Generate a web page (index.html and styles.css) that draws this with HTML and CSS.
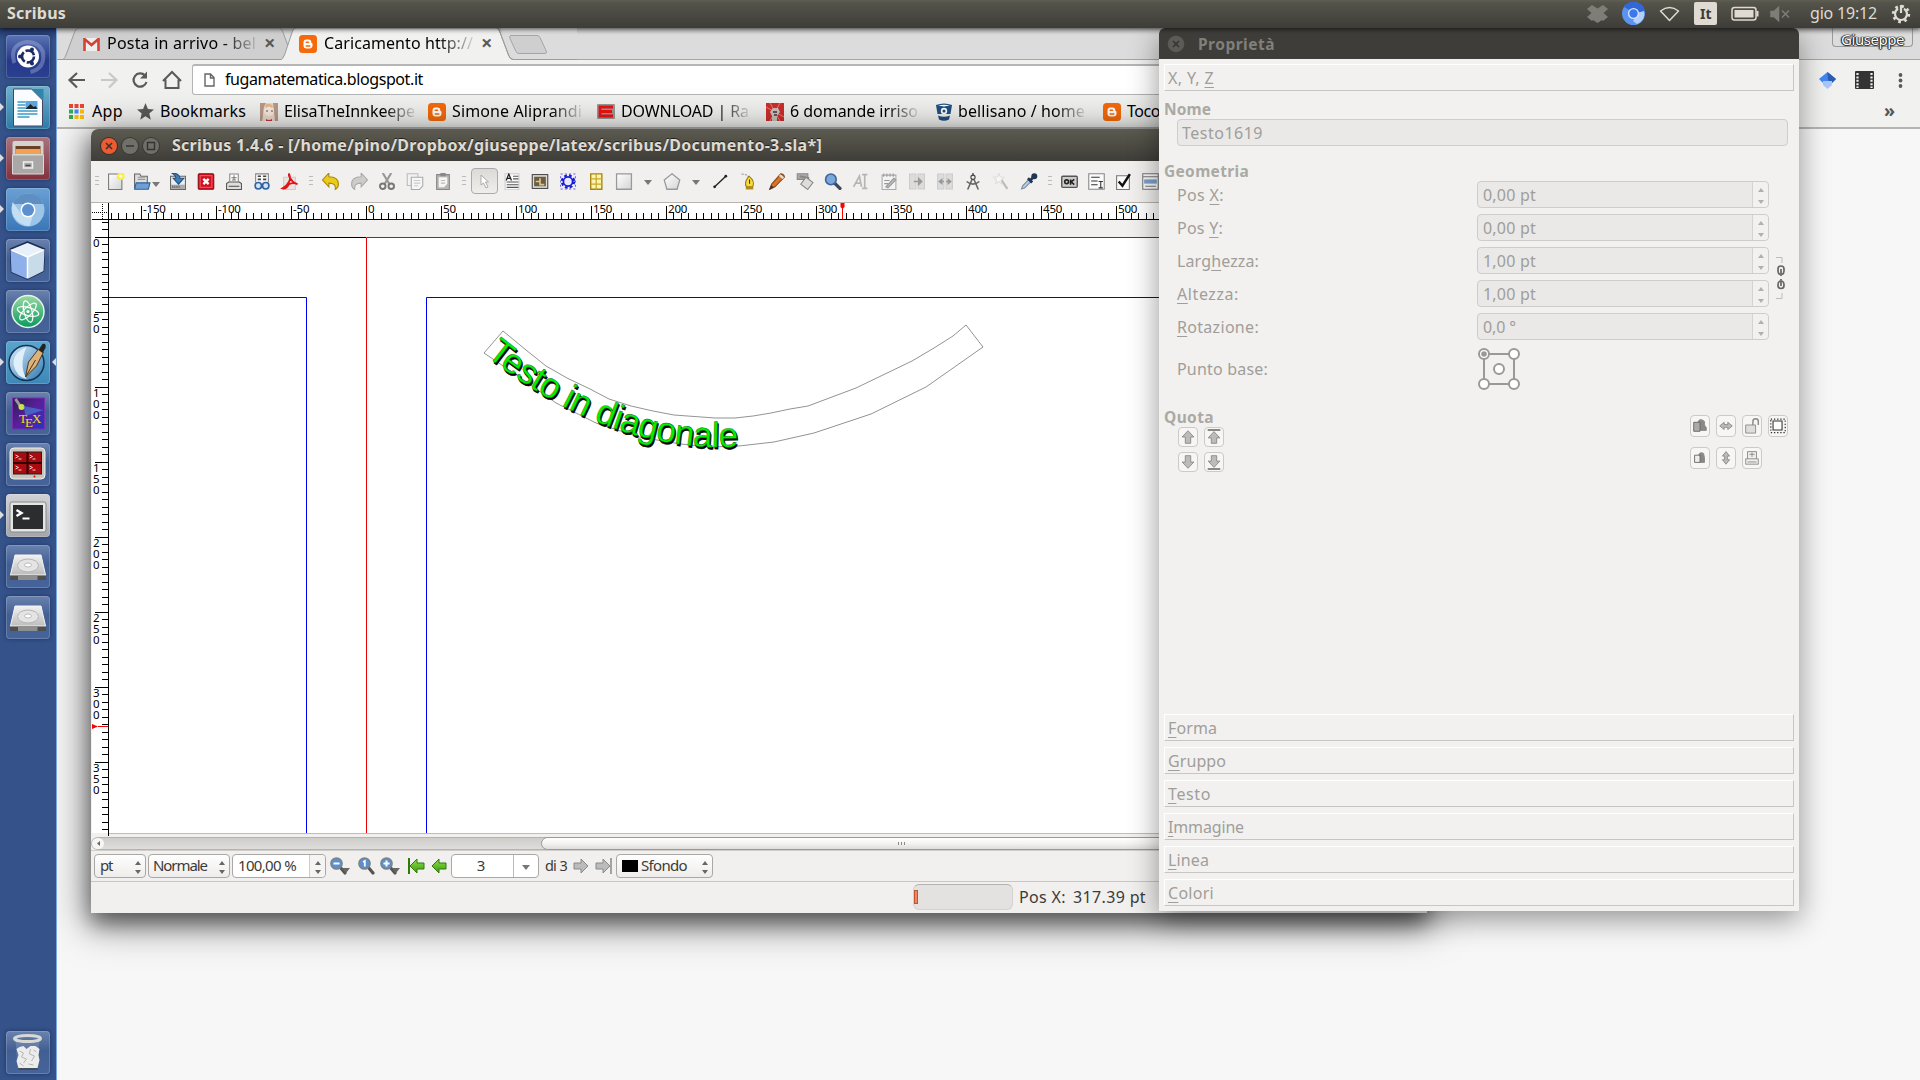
FILE: index.html
```
<!DOCTYPE html>
<html lang="it">
<head>
<meta charset="utf-8">
<title>Scribus</title>
<link rel="stylesheet" href="styles.css">
</head>
<body>
<svg class="defs" width="0" height="0">
  <defs>
    <linearGradient id="gGrey" x1="0" y1="0" x2="1" y2="1"><stop offset="0" stop-color="#fff"/><stop offset="1" stop-color="#d4d4d4"/></linearGradient>
    <linearGradient id="gGreen" x1="0" y1="0" x2="0" y2="1"><stop offset="0" stop-color="#8be04a"/><stop offset="1" stop-color="#3f9a10"/></linearGradient>
    <linearGradient id="gBlue" x1="0" y1="0" x2="1" y2="1"><stop offset="0" stop-color="#d8ecfa"/><stop offset="1" stop-color="#2f78b4"/></linearGradient>
    <linearGradient id="gAtom" x1="0" y1="0" x2="0" y2="1"><stop offset="0" stop-color="#9ad9a2"/><stop offset="1" stop-color="#0a9a5f"/></linearGradient>
    <linearGradient id="gTex" x1="0" y1="0" x2="1" y2="1"><stop offset="0" stop-color="#2c1c50"/><stop offset=".5" stop-color="#5a1f9c"/><stop offset="1" stop-color="#2436c0"/></linearGradient>
    <linearGradient id="gDrive" x1="0" y1="0" x2="0" y2="1"><stop offset="0" stop-color="#f2f2f2"/><stop offset="1" stop-color="#bdbdbd"/></linearGradient>
    <symbol id="blogger" viewBox="0 0 18 18"><rect width="18" height="18" rx="3.5" fill="#f66a0a"/><path d="M4.500 7.500a3 3 0 0 1 3-3h2a2.800 2.800 0 0 1 2.800 2.800c0 .8.400 1 1.200 1.200v2a3 3 0 0 1-3 3h-3a3 3 0 0 1-3-3z" fill="#fff"/><path d="M7.200 7.200h2.300M7.200 11h3.600" stroke="#f66a0a" stroke-width="1.500" stroke-linecap="round"/></symbol>
    <symbol id="arrow" viewBox="0 0 16 16"><path d="M15 5H8V1L1 8l7 7v-4h7z"/></symbol>
    <symbol id="lens" viewBox="0 0 20 18"><path d="M11 10l5 6" stroke="#555" stroke-width="3.200" stroke-linecap="round"/><circle cx="7.500" cy="6.500" r="5.600" fill="#5b90cf" stroke="#7c8288" stroke-width="1.500"/></symbol>
    <symbol id="drive" viewBox="0 0 43 43"><path d="M8.500 10h26l4.500 20H4z" fill="url(#gDrive)" stroke="#f5f5f5"/><path d="M3.500 30h36v5h-36z" fill="#8f8f8f"/><path d="M3.500 31h8v4h-8zM31 31h8.500v4H31z" fill="#4e4e4e"/><ellipse cx="21.500" cy="20.500" rx="10.500" ry="6.500" fill="#e4e4e4" stroke="#b5b5b5"/><ellipse cx="21.500" cy="20" rx="3.500" ry="2" fill="#fff" stroke="#bbb"/></symbol>
  </defs>
</svg>

<div class="desktop">
  <section class="browser">
    <div class="tabstrip">
      <svg class="tabs" width="520" height="33" viewBox="57 27 520 33">
        <path d="M57 59.500H63Q65 58 66 55L75 31Q76.500 28 79 28H279Q281 28 282.500 31L288 46V59.500z" fill="#cfcfcf" stroke="#9c9c9c"/>
        <path d="M280 60.500Q283 59 284.500 55L292.500 31Q294 28 296 28H496Q498 28 499.500 31L508.500 55Q510 59.500 513 59.500H577V61z" fill="#f1f1f0" stroke="#9c9c9c"/>
        <path d="M514 59.500H577V27H500Z" fill="#dcdcdc"/><path d="M498 28Q499 29 499.500 31L508.500 55Q510 59.500 513 59.500H577" fill="none" stroke="#9c9c9c"/>
        <path d="M511 35.500h26q2 0 3 2l6 13q1.500 3-1 3h-26q-2 0-3-2l-6-13q-1-3 1-3z" fill="#cfcfcf" stroke="#a5a5a5"/>
      </svg>
      <div class="tab tab-a">
        <svg width="17" height="13" viewBox="0 0 17 13"><path d="M1 0h15v13H1z" fill="#eee"/><path d="M1.500 13V1l7 6 7-6v12" fill="none" stroke="#d54234" stroke-width="2.600"/></svg>
        <span class="fade" data-w="149">Posta in arrivo - bel</span><b class="x">×</b>
      </div>
      <div class="tab tab-b">
        <svg width="18" height="18"><use href="#blogger"/></svg>
        <span class="fade" data-w="149">Caricamento http://</span><b class="x">×</b>
      </div>
      <div class="user"><span data-w="63">Giuseppe</span></div>
    </div>
    <div class="navbar">
      <svg width="124" height="24" viewBox="0 0 124 24" fill="none" stroke="#5a5a5a" stroke-width="2.200">
        <path d="M12 5l-7.500 7L12 19.500M5 12h15"/><path d="M44 5l7.500 7-7.500 7.500M51 12H36" stroke="#c8c8c8"/>
        <path d="M80 7.500A6.600 6.600 0 1 0 81.500 14"/><path d="M82 3.500v7h-7z" fill="#5a5a5a" stroke="none"/>
        <path d="M98 13l9-9 9 9M100.500 11.500V20h13v-8.500" stroke-width="2"/>
      </svg>
      <div class="url"><svg width="11" height="14" viewBox="0 0 11 14"><path d="M1 1h5.500L10 4.500V13H1zM6.500 1v4H10" fill="#fff" stroke="#666" stroke-width="1.400"/></svg><span data-w="198">fugamatematica.blogspot.it</span></div>
      <svg class="ext" width="100" height="24" viewBox="1810 68 100 24">
        <path d="M1827.500 72l8.500 7-4 4h-9l-4-4z" fill="#4285f4"/><path d="M1827.500 72l8.500 7-4 4-4-3z" fill="#2a5db0"/><path d="M1823 81h9v4l-4.500 4-4.500-4z" fill="#a8c7fa"/>
        <rect x="1855" y="71" width="19" height="18" rx="1" fill="#333"/><path d="M1857.500 73v15M1871.500 73v15" stroke="#eee" stroke-width="2.200" stroke-dasharray="2 1.400"/>
        <g fill="#5a5a5a"><circle cx="1900.500" cy="75" r="1.900"/><circle cx="1900.500" cy="80.500" r="1.900"/><circle cx="1900.500" cy="86" r="1.900"/></g>
      </svg>
    </div>
    <div class="bookmarks">
      <svg width="15" height="15" viewBox="0 0 15 15"><path d="M0 0h4v4H0zM5.500 0h4v4h-4zM11 0h4v4h-4z" fill="#ea4335"/><path d="M0 5.500h4v4H0zM0 11h4v4H0z" fill="#34a853"/><path d="M5.500 5.500h4v4h-4z" fill="#4285f4"/><path d="M11 5.500h4v4h-4zM5.500 11h4v4h-4zM11 11h4v4h-4z" fill="#fbbc05"/></svg>
      <span class="bm w69" data-w="31">App</span>
      <svg width="17" height="17" viewBox="0 0 17 17"><path d="M8.500 0l2.400 6 6.100.4-4.700 4 1.500 6.300-5.300-3.500-5.300 3.500 1.500-6.300L0 6.400 6.100 6z" fill="#5a5a5a"/></svg>
      <span class="bm" data-w="86">Bookmarks</span>
      <svg class="g14" width="18" height="18" viewBox="0 0 18 18"><rect width="18" height="18" fill="#ecd9cc"/><path d="M0 0h6C2 5 4 13 2 18H0zM13 0h5v18h-3z" fill="#b99a86"/><circle cx="9" cy="8" r="5" fill="#fbe9dd"/><path d="M5 2q4-3 8 1l-1 2q-3-3-6 0z" fill="#e4b98a"/><path d="M6 8h2M11 8h2" stroke="#556"/><path d="M6 16q3 2 6 0v2H6z" fill="#c33"/></svg>
      <span class="bm fade" data-w="131">ElisaTheInnkeepe</span>
      <svg class="g13" width="18" height="18"><use href="#blogger"/></svg>
      <span class="bm fade" data-w="130">Simone Aliprandi</span>
      <svg class="g15" width="18" height="15" viewBox="0 0 18 15"><rect width="18" height="15" rx="1" fill="#999"/><path d="M16 3H3v9h13M3 7.500h12" stroke="#e11" stroke-width="2.800" fill="none"/></svg>
      <span class="bm fade" data-w="128">DOWNLOAD | Ra</span>
      <svg class="g17" width="18" height="18" viewBox="0 0 18 18"><rect width="18" height="18" fill="#cf2d2d"/><path d="M0 4l18 10M4 0l10 18M14 0L4 18" stroke="#e8807a"/><path d="M6 18v-5l-2-4 3-4h5l2 4-3 4v5z" fill="#c9c3bd"/><path d="M7 9h4M8 12h3" stroke="#433" stroke-width="1.500"/></svg>
      <span class="bm fade" data-w="128">6 domande irriso</span>
      <svg class="g18" width="16" height="18" viewBox="0 0 16 18"><path d="M0 2q8-3 16 0l-1.500 9H1.500zM2 12.500q6 2.500 12 0l-1 4q-5 2.500-10 0z" fill="#205081"/><circle cx="8" cy="8" r="3.200" fill="#fff"/><circle cx="8" cy="8" r="1.500" fill="#205081"/><path d="M2 2.600q6-1.600 12 0-6 1.600-12 0z" fill="#fff"/></svg>
      <span class="bm fade" data-w="127">bellisano / home</span>
      <svg class="g18" width="18" height="18"><use href="#blogger"/></svg>
      <span class="bm" data-w="33">Toco</span>
      <b class="more">»</b>
    </div>
  </section>

  <section class="scribus">
    <header class="title">
      <svg width="66" height="20" viewBox="0 0 66 20"><circle cx="10" cy="10" r="9" fill="#32312c"/><circle cx="10" cy="10" r="8" fill="#ec5b32"/><path d="M7 7l6 6M13 7l-6 6" stroke="#40302a" stroke-width="1.600"/><circle cx="31" cy="10" r="9" fill="#3a3934"/><circle cx="31" cy="10" r="8" fill="#716f69"/><path d="M27 10h8" stroke="#333" stroke-width="1.500"/><circle cx="52" cy="10" r="9" fill="#3a3934"/><circle cx="52" cy="10" r="8" fill="#716f69"/><path d="M48.500 6.500h7v7h-7z" fill="none" stroke="#333" stroke-width="1.400"/></svg>
      <span data-w="650">Scribus 1.4.6 - [/home/pino/Dropbox/giuseppe/latex/scribus/Documento-3.sla*]</span>
    </header>
    <div class="toolbar">
      <i class="h w11"></i>
      <svg class="w27" viewBox="0 0 16 16"><path d="M1.500 1h12.500v14.500H1.500z" fill="url(#gGrey)" stroke="#777"/><circle cx="13" cy="3" r="3.600" fill="#f7ee45"/><circle cx="13" cy="3" r="1.500" fill="#fffbd0"/></svg>
      <svg class="w26" viewBox="0 0 16 16"><path d="M1 14V1h5l1 2h6v11z" fill="#ddd" stroke="#666"/><path d="M4 4h7M4 6h7" stroke="#999"/><path d="M1 15.300l1.500-6h13l-1.500 6z" fill="#6d9fd4" stroke="#2f5f96"/></svg><i class="tri w9"></i>
      <svg class="w28" viewBox="0 0 16 16"><path d="M1 3h14v12.500H1z" fill="#eee" stroke="#666"/><path d="M1.500 11h13v4h-13z" fill="#aaa"/><path d="M3 12v2M5 12v2M7 12v2M9 12v2" stroke="#666"/><path d="M2 0q7 0 8 5h3.500L8.500 10.500 3.500 5H6Q6 2 2 0z" fill="#3f7fb8" stroke="#1f4f80"/></svg>
      <svg class="w28" viewBox="0 0 16 16"><rect x=".7" y=".7" width="14.600" height="14.600" rx="1" fill="#cf1120" stroke="#8c0a14"/><rect x="2.500" y="2.500" width="11" height="11" fill="none" stroke="#f05a62"/><path d="M5.500 5.500l5 5M10.500 5.500l-5 5" stroke="#fff" stroke-width="2.200"/></svg>
      <svg class="w28" viewBox="0 0 16 16"><path d="M4 8V1h8v7" fill="#fff" stroke="#888"/><path d="M5.500 4.500h5M8 2v5M6 6.500h4" stroke="#777"/><path d="M1 15.500V10l2-1.500h10l2 1.500v5.500z" fill="#dedede" stroke="#555"/><path d="M3 12.500h10" stroke="#555"/></svg>
      <svg class="w28" viewBox="0 0 16 16"><path d="M2 9V.8h12V9" fill="#f8f8f8" stroke="#888"/><path d="M4 3h3M4 6h3M9 3h3M9 6h3" stroke="#444" stroke-width="1.500"/><circle cx="4.500" cy="12" r="3" fill="#d5e4f5" stroke="#2d62a3" stroke-width="1.500"/><circle cx="11.500" cy="12" r="3" fill="#d5e4f5" stroke="#2d62a3" stroke-width="1.500"/></svg>
      <svg class="w28" viewBox="0 0 16 16"><path d="M2 4h11v11.500H2z" fill="#e8e4e4" stroke="#ccc"/><path d="M7 .5q2 5 0 8-2 4-6 6 3 1 6-4 4-2 8 0-5-1-8-8z" fill="#fff" stroke="#e01616" stroke-width="1.800"/></svg>
      <i class="h w13"></i>
      <svg class="w28" viewBox="0 0 16 16"><path d="M6 0v3.500q9 0 9 7 0 3-3 5 1-6-6-6V13L0 6.500z" fill="#eccb1c" stroke="#a88a08"/></svg>
      <svg class="w28" viewBox="0 0 16 16"><path d="M10 0v3.500q-9 0-9 7 0 3 3 5-1-6 6-6V13l6-6.500z" fill="#ccc" stroke="#aaa"/></svg>
      <svg class="w28" viewBox="0 0 16 16"><path d="M4 0l6 10M12 0L6 10" stroke="#999" stroke-width="2"/><circle cx="4" cy="12.500" r="2.600" fill="none" stroke="#777" stroke-width="1.800"/><circle cx="12" cy="12.500" r="2.600" fill="none" stroke="#777" stroke-width="1.800"/></svg>
      <svg class="w28" viewBox="0 0 16 16"><path d="M.7.700h10v11H.7z" fill="#f2f2f2" stroke="#bbb"/><path d="M4.500 4h10.800v8l-3 3.500H4.500z" fill="#f6f6f6" stroke="#aaa"/><path d="M7 7h6M7 9.500h6M7 12h4" stroke="#ccc"/></svg>
      <svg class="w28" viewBox="0 0 16 16"><path d="M2 1.500h12v14H2z" fill="#b5b5b5" stroke="#888"/><path d="M4 4h8v6l-3 3.500H4z" fill="#f5f5f5"/><path d="M5.500 0h5v3h-5z" fill="#888"/><path d="M6 7h4M6 9.500h4" stroke="#bbb"/></svg>
      <i class="h w14"></i>
      <div class="w27 pressed"><svg viewBox="0 0 16 16"><path d="M4 2l7.500 7H8.500l2.500 5-2 1-2.500-5L4 12z" fill="#fff" stroke="#aaa"/></svg></div>
      <svg class="w28" viewBox="0 0 16 16"><path d="M1.500.700h13v15h-13z" fill="#fafafa" stroke="#ccc"/><path d="M9 3h5M9 5.500h5M3 8.500h11M3 11h11M3 13.500h11" stroke="#555"/><path d="M2.500 7l2.500-6 2.500 6M3.500 5h3" stroke="#222" fill="none" stroke-width="1.200"/></svg>
      <svg class="w28" viewBox="0 0 16 16"><rect x=".7" y="1.500" width="14.600" height="13" fill="#ddd" stroke="#444"/><path d="M2.500 3.500h11v9h-11z" fill="#6b5c42"/><path d="M4 8h4V5M8 8v3h4" stroke="#d9c48b" fill="none" stroke-width="1.600"/></svg>
      <svg class="w28" viewBox="0 0 16 16"><path d="M1 1h14v14H1z" fill="none" stroke="#66e" stroke-dasharray="2 2"/><circle cx="8" cy="8" r="5.800" fill="none" stroke="#1919d8" stroke-width="2" stroke-dasharray="2.600 2"/><circle cx="8" cy="8" r="4.300" fill="#e8e8ff" stroke="#1919d8" stroke-width="1.600"/></svg>
      <svg class="w28" viewBox="0 0 16 16"><path d="M3 .8h10.500v14.500H3z" fill="#fdf4b0" stroke="#a58510" stroke-width="1.300"/><path d="M8.200 1v14.500M3 5.500h10.500M3 10.500h10.500" stroke="#c9a82e" stroke-width="1.200"/></svg>
      <svg class="w28" viewBox="0 0 16 16"><path d="M1 .8h14v14.500H1z" fill="url(#gGrey)" stroke="#999" stroke-width="1.200"/></svg>
      <i class="tri w20"></i>
      <svg class="w28" viewBox="0 0 16 16"><path d="M8 .8l7.300 5.700-2.500 8.800H3.200L.7 6.500z" fill="url(#gGrey)" stroke="#999" stroke-width="1.200"/></svg>
      <i class="tri w20"></i>
      <svg class="w29" viewBox="0 0 16 16"><path d="M2 13.500L13 3" stroke="#222" stroke-width="1.300"/><circle cx="2.500" cy="13" r="1.300" fill="#222"/><circle cx="13" cy="3" r="1.300" fill="#222"/></svg>
      <svg class="w28" viewBox="0 0 16 16"><path d="M1 1q6 0 8 5" stroke="#999" fill="none" stroke-dasharray="2 1"/><path d="M8 3q6 5 3.500 10h-6Q3 9 8 3z" fill="#f5db3d" stroke="#9a7c12"/><path d="M5 13h7v2.500H5z" fill="#b08b16"/><path d="M8.500 6v4" stroke="#333"/></svg>
      <svg class="w28" viewBox="0 0 16 16"><path d="M1 15.500l2-5L11.500.800q3 0 3.500 3L6 13z" fill="#d9742b" stroke="#8c4413"/><path d="M1 15.500l1.500-4 2.500 2z" fill="#333"/><path d="M10.500 2L14 5" stroke="#e8e0d8" stroke-width="2"/></svg>
      <svg class="w28" viewBox="0 0 16 16"><path d="M.7.700h10V6H.7z" fill="#aaa" stroke="#888"/><path d="M3 3l9 2" stroke="#888" stroke-width="2"/><path d="M9 4l6.500 5-5 6.500L4 10.500z" fill="#ddd" stroke="#888"/></svg>
      <svg class="w28" viewBox="0 0 16 16"><path d="M9.500 9.500l5 5" stroke="#3d4a5c" stroke-width="3.200" stroke-linecap="round"/><circle cx="6" cy="6" r="5" fill="#7ba7db" stroke="#3b679d" stroke-width="1.500"/></svg>
      <svg class="w28" viewBox="0 0 16 16" fill="none" stroke="#b5b5b5" stroke-width="1.600"><path d="M1 13L6.500 3l2 10M3 9.500h5M9 1.500h5M9 14.500h5M11.500 1.500v13"/></svg>
      <svg class="w28" viewBox="0 0 16 16"><path d="M1.500 2h13v13.500h-13z" fill="#f3f3f3" stroke="#aaa"/><path d="M3 .5v3M6 .5v3M9 .5v3M12 .5v3M3.500 7h5M3.500 10h4" stroke="#999"/><path d="M5 13l7.500-8 2 1.500L7 14z" fill="#bbb" stroke="#999"/></svg>
      <svg class="w28" viewBox="0 0 16 16"><path d="M1 1h6v14H1zM9 1h6v14H9z" fill="#dcdcdc" stroke="#ccc"/><path d="M5 8h7M9.500 5v6l3-3z" fill="#aaa" stroke="#999" stroke-width="1.300"/></svg>
      <svg class="w28" viewBox="0 0 16 16"><path d="M1 1h6v14H1zM9 1h6v14H9z" fill="#dcdcdc" stroke="#ccc"/><path d="M4 8h3M9 8h3M5 6v4L2.500 8zM11 6v4l2.500-2z" fill="#999" stroke="#999" stroke-width="1.200"/></svg>
      <svg class="w28" viewBox="0 0 16 16"><path d="M8 0v3M8 4L3 15.500M8 4l5 11.500M2 8q6 5 12 0" stroke="#666" fill="none" stroke-width="1.500"/><circle cx="8" cy="4" r="2" fill="#eee" stroke="#444"/></svg>
      <svg class="w28" viewBox="0 0 16 16"><path d="M8 6l6 9" stroke="#bbb" stroke-width="2"/><path d="M6 0l1.200 3.500L11 4 8 6.500l.5 3.500L6 8l-3 2 .7-3.500L1 4l3.800-.5z" fill="#f7f7f7" stroke="#ddd"/></svg>
      <svg class="w28" viewBox="0 0 16 16"><path d="M1 15l1-3 6-6 2 2-6 6z" fill="#b7d1ea" stroke="#7b8a99"/><path d="M7 5l4 4M9 7l4-4" stroke="#1f3756" stroke-width="2.500"/><circle cx="13" cy="3" r="2.800" fill="#1f3756"/></svg>
      <i class="h w13"></i>
      <svg class="w27" viewBox="0 0 16 16"><rect x=".7" y="3" width="14.600" height="10.500" rx="1" fill="#ccc" stroke="#555" stroke-width="1.300"/><circle cx="5.300" cy="8.300" r="1.800" fill="none" stroke="#222" stroke-width="1.500"/><path d="M9 6v5M12.500 6L9.500 8.300l3 2.700" stroke="#222" fill="none" stroke-width="1.500"/></svg>
      <svg class="w27" viewBox="0 0 16 16"><path d="M.7.700h14.600v14.600H.7z" fill="#fafafa" stroke="#888"/><path d="M3 4h8M3 7.500h6M3 11h6M10 8h4M10 14h4M12 8v6" stroke="#333"/></svg>
      <svg class="w27" viewBox="0 0 16 16"><path d="M1.500 2.500h12v13h-12z" fill="#fafafa" stroke="#777"/><path d="M3.500 8l3.500 4L14 1" fill="none" stroke="#111" stroke-width="2.300"/></svg>
      <svg class="w27" viewBox="0 0 16 16"><path d="M.7.700h14.600v14.600H.7z" fill="#fafafa" stroke="#777"/><path d="M1 3.500h14M3 12.500h10" stroke="#777"/><path d="M2 6h12v4H2z" fill="#7ea2cc"/></svg>
    </div>
    <svg class="canvas" width="1336" height="635" viewBox="91 202 1336 635">
      <rect x="91" y="202" width="1336" height="635" fill="#f1f0ee"/>
      <rect x="91" y="202" width="1336" height="1" fill="#b8b5b0"/>
      <rect x="92" y="203" width="1335" height="17" fill="#fff"/>
      <rect x="92" y="220" width="17" height="613" fill="#fff"/>
      <rect x="109" y="237" width="1318" height="596" fill="#fff"/>
      <path d="M109 833.500H1427" stroke="#c0beba"/>
      <path d="M92 212.500h16M102.500 204v16" stroke="#000" stroke-dasharray="1 1"/>
      <g fill="none"><path d="M109 237.500H366" stroke="#000"/><path d="M1427 237.500H366.500V833" stroke="#e60000"/><path d="M109 297.500H306.500V833M426.500 833V297.500H1427" stroke="#0000f0"/></g>
      <g id="ruler" stroke="#000"></g>
      <g id="labels" class="ruler-text"></g>
      <path d="M92 219.500H1427M108.500 203V836" stroke="#000"/>
      <path d="M842.500 206V219M98 726.500h10" stroke="#f00"/><path d="M840.500 203h4v4l-2 2-2-2zM92 724l6 2.500-6 2.500z" fill="#f00"/>
      <path d="M503 331L526 350L546 366L567 378L590 389L609 399L631 406L653 411L674 415L715 418L735 418L753 416L771 413L790 409L808 406L856 388L912 361L934 348L953 336L966 325L983 347L926 387L871 414L814 433L774 442L739 446L710 447L681 444L639 437L596 423L556 403L521 378L484 353Z" fill="none" stroke="#777" stroke-width=".8"/>
      <path id="curve" d="M484 354Q594 442 710 447Q760 449 814 433" fill="none"/>
      <g class="arc"><text transform="translate(1 2)" fill="#000" stroke="#000" stroke-width=".6"><textPath href="#curve" startOffset="2" textLength="275">Testo in diagonale</textPath></text>
      <text fill="#00f000" stroke="#0a5a0a" stroke-width=".4"><textPath href="#curve" startOffset="2" textLength="275">Testo in diagonale</textPath></text></g>
    </svg>
    <div class="scroll"><svg class="sbtn" viewBox="0 0 12 11"><path d="M8 3v5L5 5.500z" fill="#666"/></svg><div class="thumb"><i></i><i></i><i></i></div></div>
    <div class="controls">
      <div class="combo c-pt"><span data-w="12">pt</span><i class="ud"></i></div>
      <div class="combo c-nor"><span data-w="54">Normale</span><i class="ud"></i></div>
      <div class="spin c-zoom"><span data-w="58">100,00 %</span><i class="ud"></i></div>
      <svg class="zo" width="21" height="18" viewBox="0 0 21 18"><use href="#lens" width="20" height="18"/><path d="M4.500 6.500h6" stroke="#fff" stroke-width="2"/><path d="M13 11h8l-4 5z" fill="#666"/></svg>
      <svg class="z1" width="18" height="18" viewBox="0 0 18 18"><use href="#lens" width="20" height="18"/><path d="M6 5l1.800-1v5.500" stroke="#fff" stroke-width="1.800" fill="none"/></svg>
      <svg class="zi" width="21" height="18" viewBox="0 0 21 18"><use href="#lens" width="20" height="18"/><path d="M4.500 6.500h6M7.500 3.500v6" stroke="#fff" stroke-width="2"/><path d="M13 11h8l-4 5z" fill="#666"/></svg>
      <svg class="a1" width="17" height="16" viewBox="0 0 17 16"><path d="M1 0v16" stroke="#2f7a0a" stroke-width="2"/><use href="#arrow" x="1" width="16" height="16" fill="url(#gGreen)" stroke="#2f7a0a"/></svg>
      <svg class="a2" width="17" height="16" viewBox="0 0 17 16"><use href="#arrow" width="16" height="16" fill="url(#gGreen)" stroke="#2f7a0a"/></svg>
      <div class="pages"><span>3</span><i class="tri"></i></div>
      <span class="di">di 3</span>
      <svg class="a3" width="17" height="16" viewBox="0 0 17 16"><use href="#arrow" width="16" height="16" fill="#bbb" stroke="#8a8a8a" transform="matrix(-1 0 0 1 17 0)"/></svg>
      <svg class="a4" width="17" height="16" viewBox="0 0 17 16"><use href="#arrow" width="16" height="16" fill="#bbb" stroke="#8a8a8a" transform="matrix(-1 0 0 1 16 0)"/><path d="M16 0v16" stroke="#8a8a8a" stroke-width="1.500"/></svg>
      <div class="combo c-sf"><b></b><span data-w="46">Sfondo</span><i class="ud"></i></div>
    </div>
    <footer class="status"><div class="prog"><i></i></div><span data-w="47">Pos X:</span><span class="pos" data-w="73">317.39 pt</span></footer>
  </section>

  <section class="props">
    <header class="ptitle"><svg width="18" height="18" viewBox="0 0 18 18"><circle cx="9" cy="9" r="8.300" fill="#5c5b56"/><path d="M6 6l6 6M12 6l-6 6" stroke="#333" stroke-width="1.500"/></svg><span data-w="77">Proprietà</span></header>
    <div class="pbody">
      <div class="sect"><span data-w="46">X, Y, <u>Z</u></span></div>
      <h3 class="nome"><span data-w="47">Nome</span></h3>
      <div class="field name"><span data-w="81">Testo1619</span></div>
      <h3 class="geo"><span data-w="85">Geometria</span></h3>
      <div class="geom">
        <div class="rows">
          <label><span data-w="47">Pos <u>X</u>:</span></label><div class="field sp"><span data-w="53">0,00 pt</span><i class="ud"></i></div>
          <label><span data-w="46">Pos <u>Y</u>:</span></label><div class="field sp"><span data-w="53">0,00 pt</span><i class="ud"></i></div>
          <label><span data-w="82">Larg<u>h</u>ezza:</span></label><div class="field sp"><span data-w="53">1,00 pt</span><i class="ud"></i></div>
          <label><span data-w="62"><u>A</u>ltezza:</span></label><div class="field sp"><span data-w="53">1,00 pt</span><i class="ud"></i></div>
          <label><span data-w="82"><u>R</u>otazione:</span></label><div class="field sp"><span data-w="33">0,0 °</span><i class="ud"></i></div>
          <label class="pb"><span data-w="91">Punto base:</span></label>
          <svg class="base" width="44" height="44" viewBox="0 0 44 44" fill="#fff" stroke="#9a9996" stroke-width="2"><path d="M7 7h30v30H7z" fill="none"/><circle cx="7" cy="7" r="5"/><circle cx="37" cy="7" r="5"/><circle cx="7" cy="37" r="5"/><circle cx="37" cy="37" r="5"/><circle cx="22" cy="22" r="5"/><circle cx="7" cy="7" r="2.800" fill="#9a9996" stroke="none"/></svg>
        </div>
        <svg class="chain" width="10" height="44" viewBox="0 0 10 44" fill="none"><path d="M0 1.500h6V7M0 42.500h6V37" stroke="#bbb"/><g stroke="#666" stroke-width="1.700"><path d="M4 18.500q-2-1-2-3.500v-2q0-3 3-3t3 3v2q0 2.500-2 3.500M5 13v7M4 25q-2 1-2 3.500v1q0 3 3 3t3-3v-1q0-2.500-2-3.500M5 23v7"/></g></svg>
      </div>
      <h3 class="quota"><span data-w="50">Quota</span></h3>
      <div class="actions">
        <div class="grid2">
          <svg viewBox="0 0 20 20"><path d="M10 3l6.500 7H13v7H7v-7H3.500z"/></svg>
          <svg viewBox="0 0 20 20"><path d="M10 4l6.500 7H13v6H7v-6H3.500z"/><path d="M3 2.200h14" class="bar"/></svg>
          <svg viewBox="0 0 20 20"><path d="M10 17l6.500-7H13V3H7v7H3.500z"/></svg>
          <svg viewBox="0 0 20 20"><path d="M10 16l6.500-7H13V3H7v6H3.500z"/><path d="M3 17.800h14" class="bar"/></svg>
        </div>
        <div class="grid4">
          <svg viewBox="0 0 20 22"><path d="M8 6q2-4 7 0v4l2 3v3H8z" fill="#888"/><path d="M3 7h7v10H3z" fill="#aaa" stroke="#666"/></svg>
          <svg viewBox="0 0 20 22"><path d="M3 11l5-4v2.500h4V7l5 4-5 4v-2.500H8V15z"/></svg>
          <svg viewBox="0 0 20 22"><path d="M3 10h11v9H3z" fill="#ddd"/><path d="M11 10V6q0-3 3-3t3 3v4" fill="none" stroke-width="1.600"/></svg>
          <svg viewBox="0 0 20 22"><path d="M4.500 5.500h10v10h-10z" fill="#fff" stroke="#333" stroke-width="1.200"/><path d="M2 3.500h16v15H2z" fill="none" stroke="#333" stroke-width="1.300" stroke-dasharray="1.500 2"/></svg>
          <svg viewBox="0 0 20 22"><path d="M9 7q1-3 5-1l1 5v5H9z" fill="#888"/><path d="M4 8h6v8H4z" fill="#eee" stroke="#666"/></svg>
          <svg viewBox="0 0 20 22"><path d="M10 4l4 5h-2.500v4H14l-4 5-4-5h2.500V9H6z"/></svg>
          <svg viewBox="0 0 20 22"><path d="M5 12V4h10v8M3 12h14v6H3z" fill="#eee"/><path d="M7 7h6M10 5v5M5 15.500h10" fill="none"/></svg>
        </div>
      </div>
      <div class="sections">
        <div class="sect"><span data-w="49"><u>F</u>orma</span></div>
        <div class="sect"><span data-w="58"><u>G</u>ruppo</span></div>
        <div class="sect"><span data-w="43"><u>T</u>esto</span></div>
        <div class="sect"><span data-w="76"><u>I</u>mmagine</span></div>
        <div class="sect"><span data-w="41"><u>L</u>inea</span></div>
        <div class="sect"><span data-w="46"><u>C</u>olori</span></div>
      </div>
    </div>
  </section>

  <nav class="launcher">
    <div class="tile t-dash"><svg viewBox="0 0 43 43"><g fill="none" stroke="#b9c8ee" stroke-opacity=".35" stroke-width="4"><path d="M8 28Q2 10 20 7q14 0 17 12M36 15q4 18-12 22"/></g><circle cx="21.500" cy="21.500" r="11" fill="#fff"/><circle cx="21.500" cy="21.500" r="6" fill="none" stroke="#1c2a66" stroke-width="2.600" stroke-dasharray="10.500 2"/><g fill="#1c2a66"><circle cx="13.500" cy="21.500" r="2"/><circle cx="25.500" cy="14.500" r="2"/><circle cx="25.500" cy="28.500" r="2"/></g></svg></div>
    <div class="tile t-writer run"><svg viewBox="0 0 43 43"><path d="M7 3h18l11 11v26H7z" fill="#fafdff" stroke="#446"/><path d="M25 3h12v11z" fill="#2f86a8"/><path d="M11 16h8M11 19h8M11 22h8M11 25h20M11 28h20M11 31h12" stroke="#3d9bc8" stroke-width="1.600"/><path d="M19 15h12v8H19z" fill="#5aa6dc"/><path d="M19 23l5-5 3 3 2-1 2 3z" fill="#222"/></svg></div>
    <div class="tile t-files run"><svg viewBox="0 0 43 43"><path d="M6 6q0-2 2-2h27q2 0 2 2v13H6z" fill="#d5d3d0"/><path d="M9 9h25v8H9z" fill="#6a4026"/><path d="M9 12h25v5H9z" fill="#f2a257"/><path d="M6 18h31v19H6z" fill="#a9a8a6" stroke="#d8d8d6"/><path d="M17 25h9v6h-9z" fill="none" stroke="#f0f0f0" stroke-width="1.500"/><path d="M19 28.500h5" stroke="#444" stroke-width="1.500"/></svg></div>
    <div class="tile t-chr run"><svg viewBox="0 0 43 43"><circle cx="21.500" cy="22" r="16.500" fill="#9cc4e8"/><path d="M6 16q4-10 15.500-10.500T37 16H21z" fill="#5f8fc0"/><path d="M6 14q-3 12 5 19 6 5 12 5l4-12-12 0z" fill="#c4def4"/><circle cx="21.500" cy="22" r="7.500" fill="#fff"/><circle cx="21.500" cy="22" r="6" fill="#5b8fd0"/></svg></div>
    <div class="tile"><svg viewBox="0 0 43 43" stroke="#1d2b58" stroke-width="1.500" stroke-linejoin="round"><path d="M21 3l17 7-1 22-16 8L5 33 4 10z" fill="#e8f0fa"/><path d="M4 10l17 8v22L5 33z" fill="#8eb0ea" stroke="none"/><path d="M21 18l17-8-1 22-16 8z" fill="#c7dbe8" stroke="none"/><path d="M5 11l16 7 16-7M21 18v21" fill="none" stroke="#fff"/></svg></div>
    <div class="tile"><svg viewBox="0 0 43 43"><circle cx="21.500" cy="21.500" r="16" fill="url(#gAtom)" stroke="#e8f5e8" stroke-width="1.500"/><g fill="none" stroke="#fff" stroke-width="1.200"><ellipse cx="21.500" cy="21.500" rx="11" ry="4" transform="rotate(15 21.500 21.500)"/><ellipse cx="21.500" cy="21.500" rx="11" ry="4" transform="rotate(75 21.500 21.500)"/><ellipse cx="21.500" cy="21.500" rx="11" ry="4" transform="rotate(135 21.500 21.500)"/></g><circle cx="21.500" cy="21.500" r="1.600" fill="#fff"/></svg></div>
    <div class="tile t-scr run act"><svg viewBox="0 0 43 43"><circle cx="20" cy="22" r="17.500" fill="url(#gBlue)" stroke="#123456" stroke-width="1.500"/><path d="M20 38Q12 24 20 6q-14 6-13 18 3 12 13 14z" fill="#dff0fb"/><path d="M19 36l3-15L32 8l5 3-7 14z" fill="#d9b27c" stroke="#4f351a"/><path d="M19 36l10-17" stroke="#4f351a"/><path d="M32 9l4-6q4-1 3 4l-3 5z" fill="#222"/></svg></div>
    <div class="tile"><svg viewBox="0 0 43 43"><rect x="6" y="6" width="32" height="31" fill="url(#gTex)" stroke="#7a2fb0"/><path d="M9 7l6 9" stroke="#999" stroke-width="3"/><circle cx="15" cy="15" r="3" fill="#c8e844"/><path d="M17 14l20 4-18 6z" fill="#3f8fe0" fill-opacity=".6"/><text x="12.500" y="31" class="tex">T<tspan dx="-2" dy="4">E</tspan><tspan dx="-1" dy="-4">X</tspan></text></svg></div>
    <div class="tile"><svg viewBox="0 0 43 43"><rect x="3.500" y="5" width="35" height="31" rx="4" fill="#c9c7bd" stroke="#eee"/><rect x="7" y="9" width="28" height="22" fill="#a80c10" stroke="#222"/><path d="M21 9v22M7 20h28" stroke="#300" stroke-width="2"/><path d="M9 12l3 1.500-3 1.500M12 16h3M23 12l3 1.500-3 1.500M26 16h3M9 23l3 1.500-3 1.500M12 27h3M23 23l3 1.500-3 1.500M26 27h3" stroke="#fcc" fill="none"/><circle cx="28" cy="33.500" r="1" fill="#d00"/></svg></div>
    <div class="tile t-term run"><svg viewBox="0 0 43 43"><rect x="3.500" y="8" width="36" height="30" rx="2" fill="#e4e4e2" stroke="#888"/><rect x="6.500" y="11" width="30" height="24" fill="#2b2d2e"/><path d="M10 16l5 3-5 3" stroke="#fff" stroke-width="2.400" fill="none"/><path d="M16 24.500h7" stroke="#fff" stroke-width="2"/></svg></div>
    <div class="tile"><svg viewBox="0 0 43 43"><use href="#drive"/></svg></div>
    <div class="tile"><svg viewBox="0 0 43 43"><use href="#drive"/></svg></div>
    <div class="tile trash"><svg viewBox="0 0 43 43"><path d="M9 9l2 28h20l2-28z" fill="#cfd8e4" fill-opacity=".2"/><path d="M10 18l3-2 4-1 3 3 4-3 5 0 4 3-1 6 1 5-2 8H12l-2-7 2-6z" fill="#ececec"/><path d="M13 20l4 2-2 4 5 2-3 4M24 18l-1 5 5 2-3 5M27 19l3 2M13 32l4 3M22 33l5 1" stroke="#b5b5b5" fill="none"/><ellipse cx="21" cy="7.500" rx="13" ry="3" fill="none" stroke="#d8d8d4" stroke-width="3"/><path d="M12 38h19" stroke="#444" stroke-width="1.500"/></svg></div>
  </nav>

  <header class="menubar">
    <b data-w="59">Scribus</b>
    <svg width="210" height="27" viewBox="1586 0 210 27">
      <path d="M1593 5l5.500 3.500L1604 5l5 4-4.500 4 4.500 4-5 4-1-1-4.500 3-4.500-3-1 1-5-4 4.500-4-4.500-4z" fill="#7f7d78"/>
      <circle cx="1634.500" cy="13.500" r="11.500" fill="#5a93f0"/><path d="M1625 7a11.500 11.500 0 0 1 21 5h-12z" fill="#3367d6"/><path d="M1645 11q2 9-7 13l-4-3 4-8z" fill="#b5cffb"/><circle cx="1634.500" cy="13.500" r="5.600" fill="#d5e3fc"/><circle cx="1634.500" cy="13.500" r="4.200" fill="#3d79ec"/>
      <path d="M1661.500 11q9-7 18 0l-9 9.500z" fill="none" stroke="#dfdbd2" stroke-width="1.500" stroke-linejoin="round"/>
      <rect x="1695" y="2" width="23" height="23" rx="2" fill="#dfdbd2"/><text x="1701" y="18.500" class="it">It</text>
      <rect x="1733" y="7.500" width="24" height="12.500" rx="2.500" fill="none" stroke="#dfdbd2" stroke-width="1.500"/><rect x="1735.500" y="10" width="19" height="7.500" fill="#dfdbd2"/><path d="M1758.500 11v5.500" stroke="#dfdbd2" stroke-width="2"/>
      <path d="M1772 11.500h3l4.500-4v13l-4.500-4h-3zM1783 10.500l7 7M1790 10.500l-7 7" fill="#7f7d78" stroke="#7f7d78" stroke-width="1.500"/>
    </svg>
    <span class="clock" data-w="67">gio 19:12</span>
    <svg width="20" height="20" viewBox="0 0 20 20"><circle cx="10" cy="10" r="7.700" fill="none" stroke="#dfdbd2" stroke-width="3" stroke-dasharray="2.600 3.450"/><path d="M7 4.800a6 6 0 1 0 6 0" fill="none" stroke="#dfdbd2" stroke-width="2.200"/><path d="M10 1v8" stroke="#dfdbd2" stroke-width="2.200"/></svg>
  </header>
</div>
<script src="script.js"></script>
</body>
</html>
```
FILE: styles.css
```
* { box-sizing: border-box; }
body { margin: 0; font: 16px/20px "Noto Sans", sans-serif; color: #3c3b37; }
svg { display: block; flex: none; }
.defs { position: absolute; }
.desktop { position: relative; width: 1920px; height: 1080px; overflow: hidden; background: #f7f7f7; }
[data-w] { white-space: pre; padding-bottom: 2px; }

/* top panel */
.menubar { position: absolute; inset: 0 0 auto 0; height: 28px; display: flex; align-items: center; padding: 0 9px 1px 7px; background: linear-gradient(#605e52, #55544b 10%, #3d3c37); color: #dfdbd2; box-shadow: 0 1px 5px rgba(0,0,0,.7); }
.menubar b { margin-right: auto; font-size: 16px; }
.menubar .clock { width: 67px; margin: 0 14px 0 15px; }
.it { font: bold 14px "Noto Sans", sans-serif; fill: #3c3b37; }

/* launcher */
.launcher { position: absolute; left: 0; top: 28px; width: 57px; height: 1052px; padding: 7px 6px 0; display: flex; flex-direction: column; gap: 8px; background: linear-gradient(#22376a, #35538a 12px); border-right: 1px solid #7aa7dd; }
.tile { position: relative; flex: none; width: 44px; height: 43px; border-radius: 4px; background: linear-gradient(#6a82ae, #425f93 45%, #46649a); box-shadow: inset 0 0 0 1px rgba(255,255,255,.18), 0 0 4px rgba(10,20,60,.5); }
.tile svg { width: 44px; height: 43px; }
.t-dash { background: linear-gradient(#5a74b4, #26388a 60%, #2a4090); }
.t-writer { background: linear-gradient(#6fb0cc, #2f7ba8); }
.t-files { background: linear-gradient(#a8757c, #82303c); }
.t-chr { background: linear-gradient(#6aa0d4, #3a76b8); }
.t-scr { background: linear-gradient(#5aa4cc, #3d88b8); }
.t-term { background: linear-gradient(#d0d2d8, #a3a5ac); }
.tex { font: 13px "Liberation Serif", serif; fill: #f4dc1e; }
.run::before { content: ""; position: absolute; left: -6px; top: 17px; border: 4px solid transparent; border-left-color: #ddd; border-right: 0; }
.act::after { content: ""; position: absolute; right: -6px; top: 17px; border: 4px solid transparent; border-right-color: #ddd; border-left: 0; }
.trash { margin-top: auto; margin-bottom: 6px; }

/* browser */
.browser { position: absolute; left: 57px; top: 27px; width: 1863px; height: 102px; background: #f1f1f0; color: #000; border-bottom: 2px solid #b4b4b2; }
.tabstrip { position: relative; height: 33px; background: linear-gradient(#bbb, #dcdcdc 8px); border-bottom: 1px solid #a5a5a5; }
.tabs { position: absolute; left: 0; top: 0; }
.tab { position: absolute; top: 0; height: 34px; display: flex; align-items: center; gap: 7px; }
.tab-a { left: 26px; }
.tab-b { left: 242px; }
.tab .fade { width: 150px; }
.fade { -webkit-mask-image: linear-gradient(90deg, #000 76%, rgba(0,0,0,.1)); mask-image: linear-gradient(90deg, #000 76%, rgba(0,0,0,.1)); }
.x { width: 14px; padding-bottom: 2px; font-size: 20px; color: #5a5a5a; }
.user { position: absolute; left: 1775px; top: 0; width: 81px; height: 20px; padding-left: 8px; border: 1px solid #999; border-top: 0; border-radius: 0 0 4px 4px; font-size: 15px; line-height: 24px; color: #fff; text-shadow: 0 0 1px #000, 0 0 1px #000, 1px 0 1px #333, -1px 0 1px #333, 0 1px 1px #333; }
.navbar { display: flex; align-items: center; height: 39px; padding: 0 0 0 8px; }
.url { display: flex; align-items: center; gap: 10px; width: 1600px; height: 31px; margin: 0 0 0 3px; padding-left: 11px; background: #fff; border: 1px solid #b5b5b5; border-top-width: 2px; border-radius: 3px; }
.ext { margin: 1px 0 0 18px; }
.bookmarks { display: flex; align-items: center; height: 24px; padding: 1px 0 0 12px; }
.bm { width: calc(var(--w) * 1px); margin-left: 6px; }
.bm.w69 { margin-left: 8px; margin-right: 14px; }
.g13 { margin-left: 13px; } .g14 { margin-left: 14px; } .g15 { margin-left: 15px; } .g17 { margin-left: 17px; } .g18 { margin-left: 18px; }
.more { margin-left: auto; padding: 0 25px 3px 0; font-size: 18px; color: #555; }

/* scribus main window */
.scribus { position: absolute; left: 91px; top: 129px; width: 1336px; height: 784px; display: flex; flex-direction: column; background: #f1f0ee; border-radius: 7px 7px 0 0; box-shadow: 0 8px 38px 4px rgba(0,0,0,.5), 0 10px 20px rgba(0,0,0,.4); }
.title { height: 32px; display: flex; align-items: center; padding: 1px 0 0 8px; gap: 7px; border-radius: 7px 7px 0 0; background: linear-gradient(#5d5b50, #3e3d38); color: #dfdbd2; font-weight: bold; font-size: 16px; text-shadow: 0 -1px #222; }
.title span { padding-bottom: 1px; }
.toolbar { display: flex; align-items: center; height: 41px; padding-bottom: 1px; }
.toolbar svg { height: 17px; }
.h { height: 10px; background: repeating-linear-gradient(#bbb 0 1px, transparent 1px 4px) center / 4px 10px no-repeat; }
.tri::after { content: ""; display: block; width: 0; margin: 2px auto 0; border: 4px solid transparent; border-top: 5px solid #777; border-bottom: 0; }
.tri.w9 { padding-top: 4px; margin-left: -4px; margin-right: 4px; }
.w9 { width: 9px; } .w11 { width: 11px; } .w13 { width: 13px; } .w14 { width: 14px; } .w20 { width: 20px; } .w26 { width: 26px; } .w27 { width: 27px; } .w28 { width: 28px; } .w29 { width: 29px; }
.pressed { height: 26px; padding: 4px 5px; border: 1px solid #aaa; border-radius: 4px; background: linear-gradient(#dcdad7, #efeeec); }
.pressed svg { width: 16px; height: 16px; }
.canvas { flex: none; }
.ruler-text { font: 11.5px "Noto Sans", sans-serif; letter-spacing: -.2px; }
.arc { font: 35px "Liberation Sans", Arial, sans-serif; }
.scroll { display: flex; height: 13px; border: 1px solid #b5b3af; background: linear-gradient(#cfcdca, #dedddb); border-radius: 7px 0 0 7px; }
.sbtn { width: 12px; height: 11px; margin-right: 437px; border-radius: 7px; background: #f5f5f4; }
.thumb { flex: 1; display: flex; gap: 2px; margin: -1px 0; padding: 4px 0 0 356px; border: 1px solid #999; border-radius: 7px; background: linear-gradient(#fff, #f4f3f1 50%, #dddcda); }
.thumb i { width: 1px; height: 3px; background: #888; }
.controls { display: flex; align-items: center; height: 32px; padding-left: 3px; border-top: 1px solid #d0cecb; border-bottom: 1px solid #c8c6c3; font-size: 15px; }
.combo, .spin, .pages { position: relative; display: flex; align-items: center; height: 24px; border: 1px solid #aaa8a4; border-radius: 4px; background: linear-gradient(#fefefe, #eeedeb); }
.spin, .pages { background: #fff; }
.ud { position: absolute; right: 0; top: 0; bottom: 0; width: 16px; }
.ud::before, .ud::after { content: ""; position: absolute; right: 4px; top: 6px; border: 3px solid transparent; border-bottom: 4px solid #666; border-top: 0; }
.ud::after { top: auto; bottom: 3px; border-top: 4px solid #666; border-bottom: 0; }
.spin .ud { background: #f5f4f3; border-left: 1px solid #ccc; border-radius: 0 4px 4px 0; }
.c-pt { width: 52px; padding-left: 5px; }
.c-nor { width: 82px; margin-left: 2px; padding-left: 4px; }
.c-zoom { width: 94px; margin-left: 2px; padding-left: 5px; }
.zo { margin-left: 3px; } .z1 { margin-left: 7px; } .zi { margin-left: 4px; }
.a1 { margin-left: 8px; } .a2 { margin-left: 6px; } .a3 { margin-left: 5px; } .a4 { margin-left: 6px; }
.pages { width: 88px; margin-left: 3px; }
.pages span { width: 62px; padding: 0 3px 2px 0; text-align: center; border-right: 1px solid #bbb; line-height: 20px; }
.pages .tri { flex: 1; }
.di { margin-left: 6px; width: 22px; padding-bottom: 2px; font-size: 14.5px; letter-spacing: -1px; word-spacing: 1px; white-space: nowrap; }
.c-sf { width: 97px; margin-left: 4px; padding-left: 5px; }
.c-sf b { width: 16px; height: 12px; margin-right: 3px; background: #000; }
.status { display: flex; align-items: center; height: 31px; padding: 0 0 1px 822px; }
.status span { padding-bottom: 0; }
.prog { width: 100px; height: 26px; margin-right: 6px; padding: 5px 0; border: 1px solid #d5d3d0; border-top-color: #b3b1ad; border-radius: 6px; background: #e3e2e0; }
.prog i { display: block; width: 4px; height: 14px; border: 1px solid #c0562f; background: #f0875f; }
.pos { margin-left: 7px; }

/* properties palette */
.props { position: absolute; left: 1159px; top: 28px; width: 640px; height: 883px; background: #f2f1ef; color: #a09e9a; border-radius: 6px 6px 0 0; box-shadow: 0 8px 30px rgba(0,0,0,.42); }
.ptitle { display: flex; align-items: center; gap: 13px; height: 31px; padding-left: 8px; border-radius: 6px 6px 0 0; background: #3e3d39; color: #817f79; font-weight: bold; font-size: 15.5px; }
.ptitle span { padding-bottom: 0; }
.pbody { display: flex; flex-direction: column; height: 852px; padding: 5px; font-size: 16px; }
.sect { flex: none; height: 27px; padding-left: 3px; line-height: 26px; border: 1px solid; border-color: #fff #c8c6c4 #c8c6c4 #fff; }
u { text-underline-offset: 3px; text-decoration-thickness: 1px; }
h3 { margin: 0; font-size: 15.5px; line-height: 20px; color: #aba9a4; }
.nome { margin-top: 8px; }
.field { position: relative; height: 27px; line-height: 26px; padding-left: 5px; border: 1px solid #cfcdca; border-radius: 4px; background: #eae9e7; }
.name { margin: 0 6px 0 13px; padding-left: 4px; }
.geo { margin-top: 15px; }
.geom { display: flex; align-items: flex-start; }
.rows { display: grid; grid-template-columns: 300px 292px; row-gap: 6px; margin-left: 13px; }
.rows label { height: 27px; line-height: 28px; }
.rows .pb { height: 53px; line-height: 47px; }
.sp .ud { background: #f3f2f0; border-left: 1px solid #d3d1ce; border-radius: 0 4px 4px 0; opacity: .9; }
.field .ud::before { border-bottom-color: #aaa; }
.field .ud::after { border-top-color: #aaa; }
.base { margin: 1px 0 0; }
.chain { margin: 75px 0 0 7px; }
.quota { margin-top: 8px; }
.actions { display: flex; justify-content: space-between; height: 60px; padding: 0 6px 0 14px; }
.actions svg { width: 20px; border: 1px solid #cccac7; border-radius: 4px; background: #f7f6f5; fill: #bbb; stroke: #8a8986; }
.grid2 { display: grid; grid-template: 20px 20px / 20px 20px; gap: 5px 6px; }
.bar { stroke-width: 2; }
.grid4 { display: grid; grid-template: 22px 22px / repeat(4, 20px); gap: 10px 6px; margin-top: -12px; }
.sections { display: flex; flex-direction: column; gap: 6px; margin-top: auto; }
```
FILE: script.js
```
const NS = "http://www.w3.org/2000/svg";
const ruler = document.getElementById("ruler");
const labels = document.getElementById("labels");

function line(x1, y1, x2, y2) {
  const p = document.createElementNS(NS, "path");
  p.setAttribute("d", `M${x1} ${y1}L${x2} ${y2}`);
  ruler.append(p);
}
function label(x, y, s) {
  const t = document.createElementNS(NS, "text");
  t.setAttribute("x", x);
  t.setAttribute("y", y);
  t.textContent = s;
  labels.append(t);
}
// one tick every 5 pt (7.5 px), a labelled one every 50 pt
for (let i = -34; i < 106; i++) {
  const x = Math.floor(366 + i * 7.5) + 0.5;
  line(x, i % 10 ? 213 : 206, x, 219);
  if (i % 10 === 0) label(x + 1.5, 212.5, i * 5);
}
for (let i = -2; i < 80; i++) {
  const y = Math.floor(237 + i * 7.5) + 0.5;
  line(i % 10 ? 102 : 95, y, 108, y);
  if (i % 10 === 0) [...String(i * 5)].forEach((c, k) => label(93, y + 9.5 + k * 11, c));
}
// letter spacing that gives each label its width
document.querySelectorAll("[data-w]").forEach((el) => {
  const w = Number(el.dataset.w);
  const r = document.createRange();
  r.selectNodeContents(el);
  el.style.letterSpacing = (w - r.getBoundingClientRect().width) / el.textContent.length + "px";
  el.style.setProperty("--w", w);
});
```
